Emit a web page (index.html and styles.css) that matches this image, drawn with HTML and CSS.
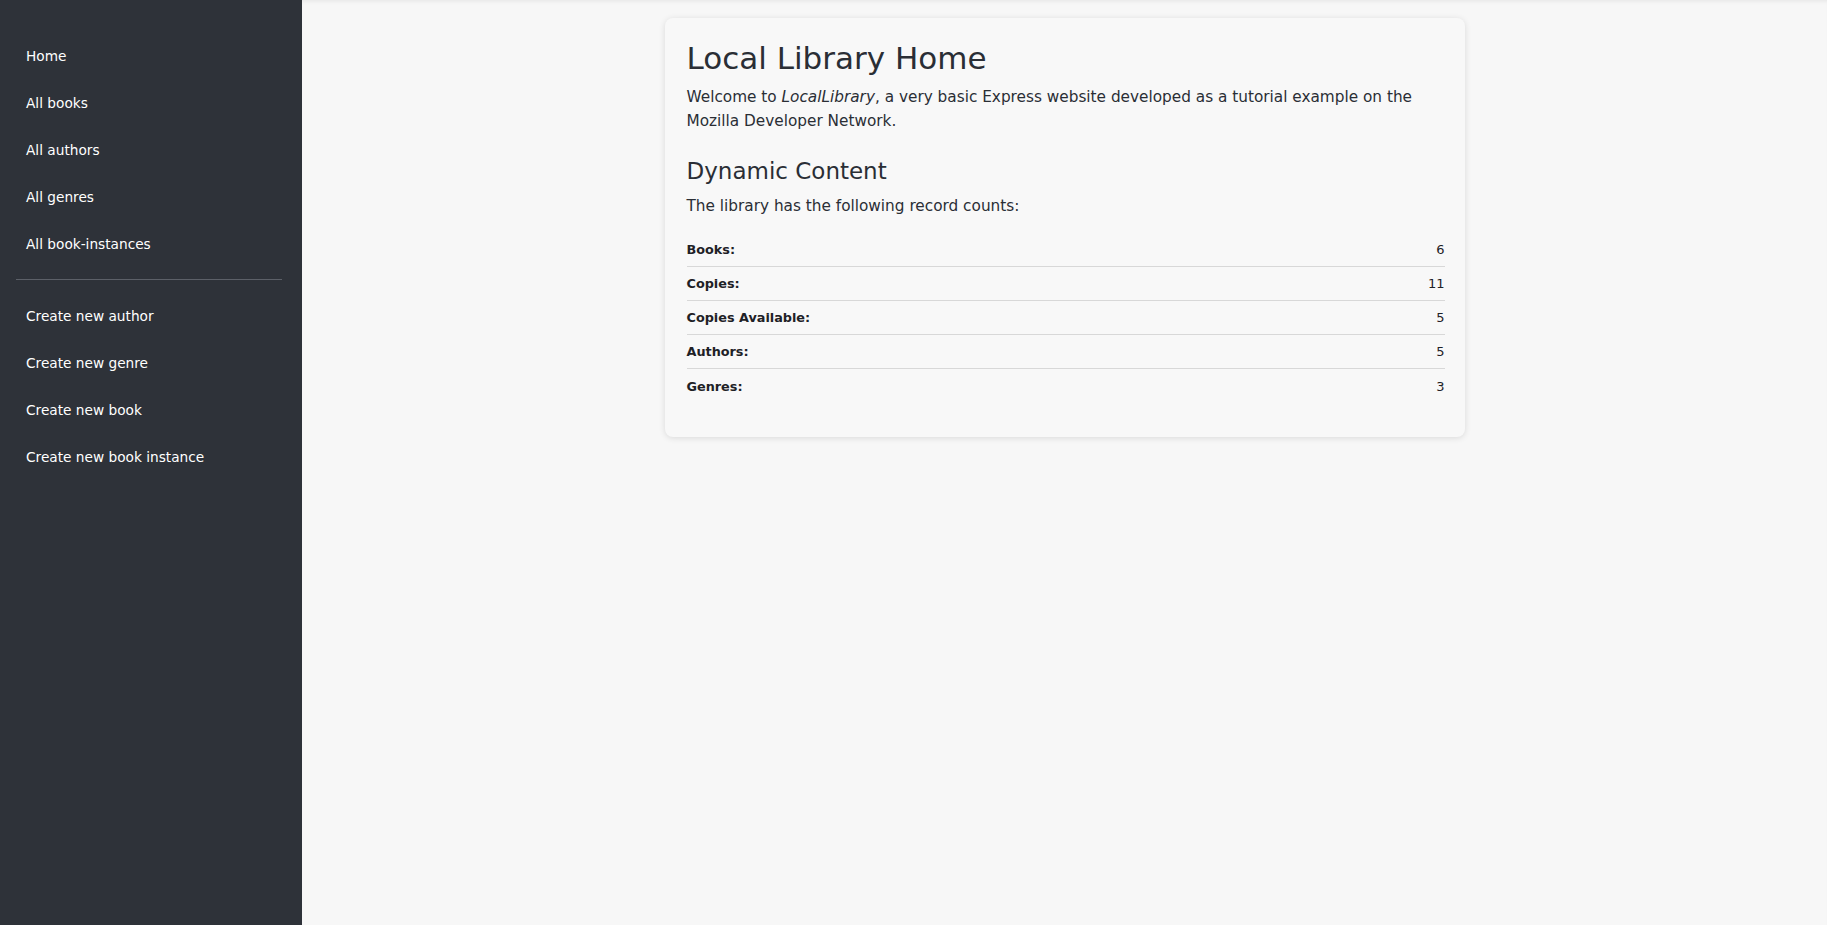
FILE: index.html
```html
<!DOCTYPE html>
<html lang="en">
<head>
<meta charset="utf-8">
<title>Local Library</title>
<link rel="stylesheet" href="styles.css">
</head>
<body>
<div class="layout">
  <aside class="sidebar">
    <nav class="nav">
      <a href="#" class="nav-link">Home</a>
      <a href="#" class="nav-link">All books</a>
      <a href="#" class="nav-link">All authors</a>
      <a href="#" class="nav-link">All genres</a>
      <a href="#" class="nav-link">All book-instances</a>
    </nav>
    <hr class="nav-sep">
    <nav class="nav">
      <a href="#" class="nav-link">Create new author</a>
      <a href="#" class="nav-link">Create new genre</a>
      <a href="#" class="nav-link">Create new book</a>
      <a href="#" class="nav-link">Create new book instance</a>
    </nav>
  </aside>
  <main class="main">
    <section class="card">
      <h1 class="title">Local Library Home</h1>
      <p class="text">Welcome to <em>LocalLibrary</em>, a very basic Express website developed as a tutorial example on the Mozilla Developer Network.</p>
      <h2 class="subtitle">Dynamic Content</h2>
      <p class="text text-tight">The library has the following record counts:</p>
      <ul class="counts">
        <li class="count-row"><strong>Books:</strong><span>6</span></li>
        <li class="count-row"><strong>Copies:</strong><span>11</span></li>
        <li class="count-row"><strong>Copies Available:</strong><span>5</span></li>
        <li class="count-row"><strong>Authors:</strong><span>5</span></li>
        <li class="count-row"><strong>Genres:</strong><span>3</span></li>
      </ul>
    </section>
  </main>
</div>
</body>
</html>
```

FILE: styles.css
```css
* { box-sizing: border-box; }
html, body { margin: 0; padding: 0; height: 100%; }
body {
  font-family: "DejaVu Sans", Verdana, sans-serif;
  background: #f7f7f7;
  color: #2a2e35;
}
.layout {
  display: flex;
  min-height: 100vh;
}
.sidebar {
  width: 302px;
  flex: 0 0 302px;
  background: #2e3239;
  padding: 33px 20px 0 16px;
}
.nav {
  display: flex;
  flex-direction: column;
}
.nav-link {
  display: block;
  color: #ffffff;
  text-decoration: none;
  font-size: 13.7px;
  line-height: 19px;
  padding: 14px 10px;
}
.nav-sep {
  border: 0;
  border-top: 1px solid #5c6068;
  margin: 11px 0 13px 0;
  height: 0;
}
.main {
  flex: 1;
  display: flex;
  justify-content: center;
  align-items: flex-start;
  padding-top: 18px;
  box-shadow: inset 0 4px 4px -3px rgba(0,0,0,0.08);
}
.card {
  width: 800px;
  background: #f8f8f8;
  border-radius: 8px;
  box-shadow: 0 1px 6px rgba(0,0,0,0.12);
  padding: 20px 20px 34px 22px;
}
.title {
  font-size: 31px;
  font-weight: normal;
  line-height: 40px;
  margin: 0 0 7px 0;
  color: #2a2e35;
}
.text {
  font-size: 15.3px;
  line-height: 24px;
  margin: 0 0 24px 0;
  color: #2a2e35;
}
.text-tight { margin-bottom: 15px; }
.subtitle {
  font-size: 23px;
  font-weight: normal;
  line-height: 28px;
  margin: 0 0 9px 0;
  color: #2a2e35;
}
.counts {
  list-style: none;
  margin: 0;
  padding: 0;
}
.count-row {
  display: flex;
  justify-content: space-between;
  align-items: center;
  height: 34px;
  font-size: 12.8px;
  color: #1e2126;
  border-bottom: 1px solid #d8d8d8;
}
.count-row:last-child { border-bottom: 0; }
.count-row strong { font-weight: bold; }
.count-row span { font-size: 13px; }
```
